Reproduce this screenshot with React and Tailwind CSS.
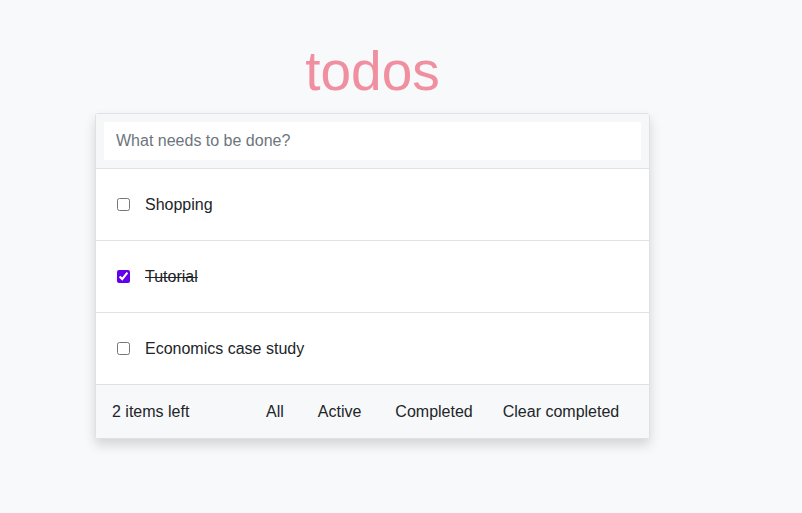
import React, { useState } from 'react';

const initialTodos = [
  { id: 1, text: 'Shopping', done: false },
  { id: 2, text: 'Tutorial', done: true },
  { id: 3, text: 'Economics case study', done: false },
];

export default function App() {
  const [todos, setTodos] = useState(initialTodos);
  const [draft, setDraft] = useState('');

  const toggle = (id) =>
    setTodos(todos.map((t) => (t.id === id ? { ...t, done: !t.done } : t)));

  const left = todos.filter((t) => !t.done).length;

  return (
    <div className="min-h-screen bg-[#f8f9fa] font-['Liberation_Sans',Arial,sans-serif] text-[#212529]">
      <div className="ml-[95px] w-[555px] pt-[35px]">
        <h1 className="text-center text-[55px] leading-[72px] text-[#ef8fa0] h-[78px]">todos</h1>
        <div className="border border-[#dee2e6] rounded-[3px] bg-white shadow-[0_6px_12px_rgba(0,0,0,0.15)]">
          <div className="bg-[#f6f7f8] p-2 border-b border-[#dee2e6]">
            <input
              className="w-full h-[38px] bg-white px-3 text-[16px] outline-none placeholder:text-[#6c757d]"
              placeholder="What needs to be done?"
              value={draft}
              onChange={(e) => setDraft(e.target.value)}
            />
          </div>
          {todos.map((t) => (
            <div key={t.id} className="flex items-center h-[72px] px-[21px] border-b border-[#dee2e6]">
              <input
                type="checkbox"
                checked={t.done}
                onChange={() => toggle(t.id)}
                className="w-[13px] h-[13px] accent-[#6200ee]"
              />
              <span className={`ml-[15px] text-[16px] ${t.done ? 'line-through' : ''}`}>{t.text}</span>
            </div>
          ))}
          <div className="flex items-center h-[53px] bg-[#f7f8f9] pl-[16px] text-[16px] text-[#212529]">
            <span className="w-[154px]">{left} items left</span>
            <button className="px-0">All</button>
            <button className="ml-[34px]">Active</button>
            <button className="ml-[34px]">Completed</button>
            <button className="ml-[30px]">Clear completed</button>
          </div>
        </div>
      </div>
    </div>
  );
}
